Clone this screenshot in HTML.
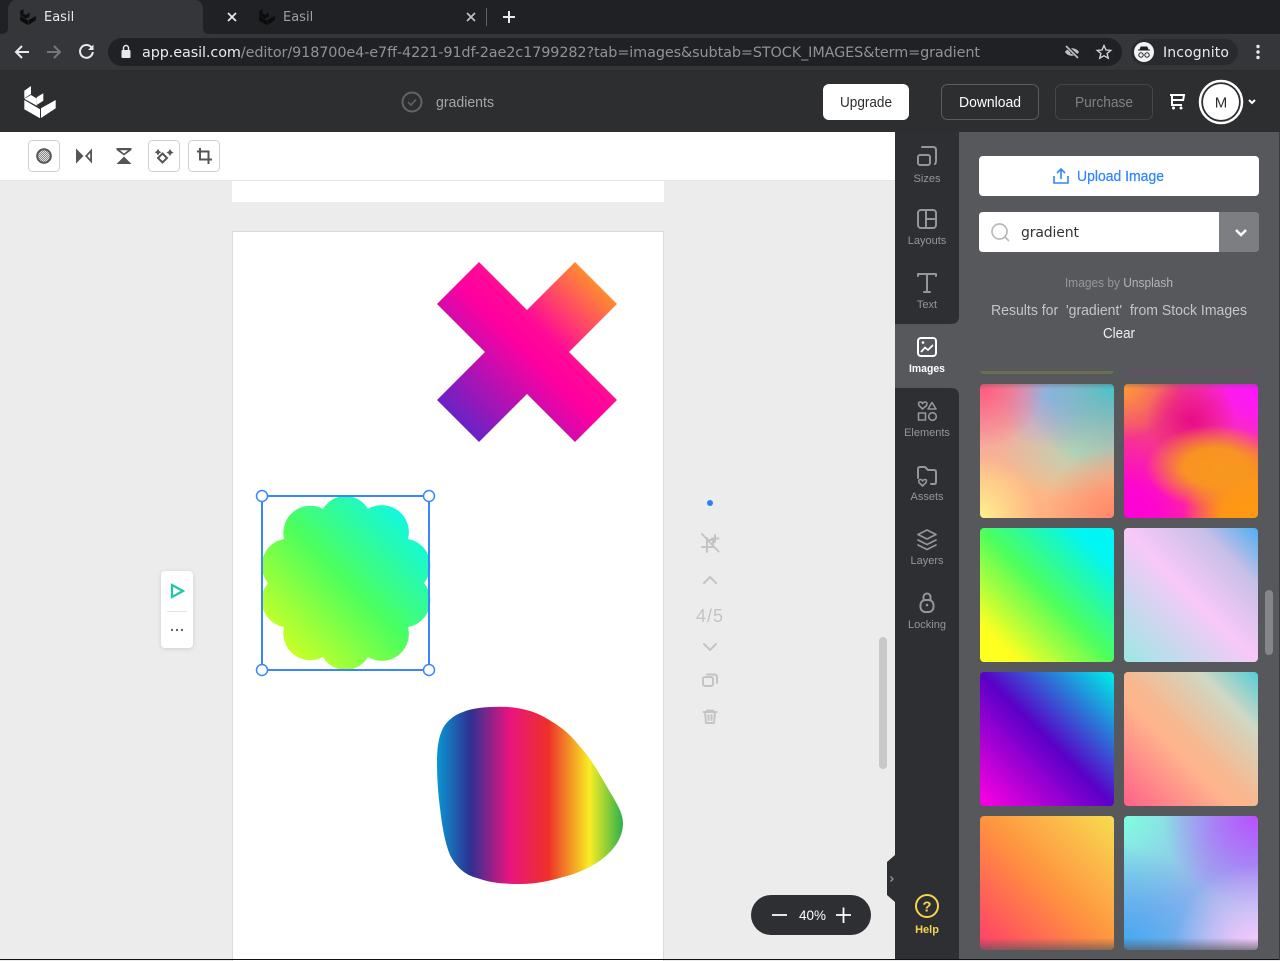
<!DOCTYPE html>
<html><head><meta charset="utf-8"><title>Easil</title>
<style>
html,body{margin:0;padding:0;width:1280px;height:960px;overflow:hidden;background:#ececec}
.a{position:absolute}
.t{position:absolute;width:134px;height:134px;border-radius:4px;overflow:hidden}
svg{position:absolute;left:0;top:0}
text{font-family:"Liberation Sans",sans-serif}
.d{font-family:"DejaVu Sans",sans-serif}
.lab{font-size:11px;fill:#95969a;text-anchor:middle}
.ic{fill:none;stroke:#95969a;stroke-width:2;stroke-linecap:round;stroke-linejoin:round}
.gr{fill:none;stroke:#c4c4c4;stroke-width:2;stroke-linecap:round;stroke-linejoin:round}
</style></head><body>
<div class="a" style="left:232px;top:180px;width:432px;height:22px;background:#fff"></div>
<div class="a" style="left:232px;top:231px;width:430px;height:729px;background:#fff;border:1px solid #dcdcdc;border-bottom:0"></div>
<div class="a" style="left:959px;top:132px;width:321px;height:828px;background:#57585c"></div>

<div class="a" style="left:980px;top:362px;width:134px;height:12px;background:#6c6d52;border-radius:0 0 4px 4px;clip-path:inset(9px 0 0 0)"></div>
<div class="a" style="left:1124px;top:362px;width:134px;height:12px;background:#654e66;border-radius:0 0 4px 4px;clip-path:inset(9px 0 0 0)"></div>

<div class="t" style="left:980px;top:384px;background:radial-gradient(circle 60px at 0% 100%,#fff190 0,rgba(255,241,144,0) 100%),radial-gradient(circle 70px at 100% 100%,#ff8668 0,rgba(255,134,104,0) 100%),radial-gradient(circle 65px at 0% 0%,#ff557c 0,rgba(255,85,124,0) 100%),radial-gradient(circle 90px at 100% 0%,#42c4cc 0,rgba(66,196,204,.6) 40%,rgba(66,196,204,0) 100%),radial-gradient(circle 55px at 52% 8%,#a0aee6 0,rgba(160,174,230,0) 100%),radial-gradient(ellipse 75px 50px at 70% 50%,#bcd4b4 0,rgba(188,212,180,0) 100%),linear-gradient(180deg,#f0a4a8 0,#f4aca0 40%,#fdb888 72%,#ffb080 100%)"></div>
<div class="t" style="left:1124px;top:384px;background:radial-gradient(ellipse 70px 42px at 68% 62%,#f8981e 0,rgba(248,152,30,.95) 45%,rgba(248,152,30,0) 100%),radial-gradient(circle 75px at 100% 100%,#ff9a10 0,rgba(255,154,16,.95) 50%,rgba(255,154,16,0) 100%),radial-gradient(circle 45px at 50% 27%,#e80c88 0,rgba(232,12,136,0) 100%),radial-gradient(circle 85px at 100% 0%,#ff14ff 0,rgba(255,20,255,.85) 35%,rgba(255,20,255,0) 100%),radial-gradient(circle 55px at 0% 0%,#ffa032 0,rgba(255,160,50,0) 100%),radial-gradient(circle 95px at 0% 100%,#ff00d8 0,rgba(255,0,216,.9) 35%,rgba(255,0,216,0) 100%),linear-gradient(#f0487a,#f83a80)"></div>
<div class="t" style="left:980px;top:528px;background:linear-gradient(45deg,#ffff20 14%,#4dff5c 50%,#00f5f5 86%)"></div>
<div class="t" style="left:1124px;top:528px;background:linear-gradient(45deg,#9ce8e4 0,#f8c8f8 50%,#c8c0e8 78%,#50aef0 100%)"></div>
<div class="t" style="left:980px;top:672px;background:linear-gradient(45deg,#f400e0 4%,#5a00c8 50%,#00e8e8 98%)"></div>
<div class="t" style="left:1124px;top:672px;background:linear-gradient(45deg,#ff6488 2%,#ffb48c 40%,#f8b890 50%,#cfd8c4 78%,#56ccd8 100%)"></div>
<div class="t" style="left:980px;top:816px;background:linear-gradient(45deg,#ff4068 2%,#ff9040 48%,#f8dc50 100%)"></div>
<div class="t" style="left:1124px;top:816px;background:radial-gradient(circle 85px at 100% 100%,#ffccff 0,rgba(255,204,255,0) 100%),radial-gradient(circle 95px at 100% 0%,#b850ff 0,rgba(184,80,255,0) 100%),radial-gradient(circle 105px at 0% 100%,#40a8f0 0,rgba(64,168,240,0) 100%),radial-gradient(circle 100px at 0% 0%,#80ffe0 0,rgba(128,255,224,0) 100%),#98b4ec"></div>
<div class="a" style="left:980px;top:384px;width:278px;height:5px;background:linear-gradient(#57585c55,#57585c00)"></div>
<div class="a" style="left:980px;top:938px;width:278px;height:12px;background:linear-gradient(#57585c00,#57585cb0)"></div>

<svg width="1280" height="960" viewBox="0 0 1280 960">
<defs>
<linearGradient id="gx" x1="0" y1="1" x2="1" y2="0"><stop offset="0.12" stop-color="#6a22c4"/><stop offset=".5" stop-color="#ff00a0"/><stop offset=".6" stop-color="#ff0a98"/><stop offset=".88" stop-color="#ff8a30"/></linearGradient>
<linearGradient id="gf" x1="0" y1="1" x2="1" y2="0"><stop offset=".14" stop-color="#c8ff28"/><stop offset=".5" stop-color="#4dff5c"/><stop offset=".88" stop-color="#10f8e4"/></linearGradient>
<linearGradient id="gb" gradientUnits="userSpaceOnUse" x1="437" y1="0" x2="623" y2="0">
<stop offset="0" stop-color="#0a96d2"/><stop offset=".18" stop-color="#2e3092"/><stop offset=".39" stop-color="#e9147f"/><stop offset=".6" stop-color="#ed3129"/><stop offset=".82" stop-color="#f9ed24"/><stop offset="1" stop-color="#2cb14a"/></linearGradient>
<pattern id="ck" width="2" height="2" patternUnits="userSpaceOnUse"><rect width="2" height="2" fill="#8a8a8a"/><rect width="1" height="1" fill="#e0e0e0"/><rect x="1" y="1" width="1" height="1" fill="#e0e0e0"/></pattern>
<g id="logo">
<path d="M24.300 90.700 L31 86 V94 L24.300 98.300Z"/>
<path d="M36.700 97.300 L43.300 93.300 V100.700 L36.700 105Z"/>
<path d="M41 108.300 L55.700 100 V108.300 L41 118Z"/>
<path d="M24.300 100 L40 109.300 V118.300 L24.300 109.300Z"/>
<path d="M24.300 98.800 L31 95 L36.700 98.500 V105.500 L40 107.500 L26 99.800Z"/>
</g>
</defs>

<!-- browser chrome -->
<rect width="1280" height="34" fill="#202124"/>
<path d="M0 34 C6 34 8 32 8 28 V10 C8 4 12 0 16 0 H195 C200 0 203 4 203 10 V28 C203 32 205 34 211 34 Z" fill="#35363a"/>
<rect y="34" width="1280" height="36" fill="#35363a"/>
<rect y="70" width="1280" height="1" fill="#2a2b2e"/>
<use href="#logo" transform="translate(8,-34) scale(.5)" fill="#0c0c0c"/>
<use href="#logo" transform="translate(247,-34) scale(.5)" fill="#0c0c0c"/>
<text x="44" y="21" class="d" font-size="13" fill="#e8eaed">Easil</text>
<text x="283" y="21" class="d" font-size="13" fill="#9aa0a6">Easil</text>
<path d="M228 13 L236 21 M236 13 L228 21" stroke="#e8eaed" stroke-width="1.700"/>
<path d="M467 13 L475 21 M475 13 L467 21" stroke="#bdc1c6" stroke-width="1.700"/>
<rect x="486" y="8" width="1" height="18" fill="#5f6368"/>
<path d="M509 11 V23 M503 17 H515" stroke="#e8eaed" stroke-width="2"/>
<path d="M29 52 H16 M22 46 L16 52 L22 58" fill="none" stroke="#e8eaed" stroke-width="2"/>
<path d="M47 52 H60 M54 46 L60 52 L54 58" fill="none" stroke="#74777b" stroke-width="2"/>
<path d="M91.500 47.500 A6.400 6.400 0 1 0 92.800 52" fill="none" stroke="#e8eaed" stroke-width="2"/><path d="M93.500 44.500 V50 H88Z" fill="#e8eaed"/>
<rect x="108" y="38" width="1014" height="28" rx="14" fill="#202124"/>
<rect x="121.500" y="50" width="9" height="8" rx="1" fill="#e8eaed"/><path d="M123.500 50 V48 a2.500 2.500 0 0 1 5 0 V50" fill="none" stroke="#e8eaed" stroke-width="1.400"/>
<text x="142" y="57" class="d" font-size="14.400" fill="#8f9398" textLength="838" lengthAdjust="spacing"><tspan fill="#e8eaed">app.easil.com</tspan>/editor/918700e4-e7ff-4221-91df-2ae2c1799282?tab=images&amp;subtab=STOCK_IMAGES&amp;term=gradient</text>
<path d="M1065 52 C1068 47 1076 47 1079 52 C1076 57 1068 57 1065 52Z" fill="#bdc1c6"/><circle cx="1072" cy="52" r="2" fill="#202124"/><path d="M1066 46 L1079 58" stroke="#202124" stroke-width="3.500"/><path d="M1066 46 L1078 58" stroke="#bdc1c6" stroke-width="1.600"/>
<path d="M1104 45.500 L1106 50 L1110.800 50.400 L1107.100 53.500 L1108.300 58.200 L1104 55.700 L1099.700 58.200 L1100.900 53.500 L1097.200 50.400 L1102 50Z" fill="none" stroke="#d8dadd" stroke-width="1.300"/>
<rect x="1131" y="39" width="107" height="26" rx="13" fill="#292a2d"/>
<circle cx="1144" cy="52" r="10" fill="#f1f3f4"/>
<path d="M1138 50.500 H1150 V49.500 H1148.500 L1147.300 46.500 H1140.700 L1139.500 49.500 H1138Z" fill="#202124"/>
<circle cx="1141" cy="55" r="2.200" fill="none" stroke="#202124" stroke-width="1"/><circle cx="1147" cy="55" r="2.200" fill="none" stroke="#202124" stroke-width="1"/>
<text x="1163" y="57" class="d" font-size="14" fill="#e8eaed" textLength="66">Incognito</text>
<circle cx="1258" cy="46.500" r="1.700" fill="#e8eaed"/><circle cx="1258" cy="52" r="1.700" fill="#e8eaed"/><circle cx="1258" cy="57.500" r="1.700" fill="#e8eaed"/>

<!-- app header -->
<rect y="71" width="1280" height="61" fill="#2d2e30"/>
<use href="#logo" fill="#fff"/>
<circle cx="412" cy="102" r="9.500" fill="none" stroke="#636467" stroke-width="2"/>
<path d="M408 102 L411 105 L416 99.500" fill="none" stroke="#636467" stroke-width="1.500"/>
<text x="436" y="107" font-size="15" fill="#a4a5a7" textLength="58" lengthAdjust="spacingAndGlyphs">gradients</text>
<rect x="823" y="84" width="86" height="36" rx="6" fill="#fff"/>
<text x="840" y="107" font-size="15" fill="#2d2e30" textLength="52" lengthAdjust="spacingAndGlyphs">Upgrade</text>
<rect x="941.500" y="84.500" width="97" height="35" rx="6" fill="none" stroke="#5c5d60"/>
<text x="959" y="107" font-size="15" fill="#fff" textLength="62" lengthAdjust="spacingAndGlyphs">Download</text>
<rect x="1055.500" y="84.500" width="97" height="35" rx="6" fill="none" stroke="#45464a"/>
<text x="1075" y="107" font-size="15" fill="#808184" textLength="58" lengthAdjust="spacingAndGlyphs">Purchase</text>
<path d="M1170 95 H1184 L1183 101 M1172 95 V105 H1182 M1172 100 H1183" fill="none" stroke="#fff" stroke-width="2"/><circle cx="1173.500" cy="108" r="1.500" fill="#fff"/><circle cx="1181" cy="108" r="1.500" fill="#fff"/>
<circle cx="1221" cy="102" r="21" fill="#2d2e30" stroke="#fff" stroke-width="2.500"/>
<circle cx="1221" cy="102" r="18" fill="#fff"/>
<text x="1221" y="107.500" font-size="15" fill="#2d2e30" text-anchor="middle">M</text>
<path d="M1249 100 L1252 103 L1255 100" fill="none" stroke="#fff" stroke-width="2"/>

<!-- toolbar -->
<rect y="132" width="895" height="48" fill="#fff"/>
<rect y="180" width="895" height="1" fill="#e6e6e6"/>
<rect x="28.500" y="140.500" width="31" height="31" rx="4" fill="#fff" stroke="#d0d0d0"/>
<rect x="148.500" y="140.500" width="31" height="31" rx="4" fill="#fff" stroke="#d0d0d0"/>
<rect x="188.500" y="140.500" width="31" height="31" rx="4" fill="#fff" stroke="#d0d0d0"/>
<circle cx="44" cy="156" r="6.800" fill="url(#ck)" stroke="#555" stroke-width="2"/>
<path d="M76 148.500 L83.500 156 L76 163.500Z M92 148.500 V163.500 L85 156Z" fill="#555"/>
<path d="M90.200 153 L87.400 156 L90.200 159Z" fill="#fff"/>
<path d="M116.500 148 H131.500 V150 L124 155.500 L116.500 150Z M116.500 164 H131.500 L124 156.500Z" fill="#555"/>
<path d="M120 150.300 H128 L124 153.500Z" fill="#fff"/>
<path d="M162.500 153.500 L167 158 L162.500 162.500 L158 158Z" fill="none" stroke="#555" stroke-width="2"/>
<path d="M158 148.800 L159.200 151 L161.400 152.200 L159.200 153.400 L158 155.600 L156.800 153.400 L154.600 152.200 L156.800 151Z M170 149 L171.300 151.200 L173.500 152.500 L171.300 153.800 L170 156 L168.700 153.800 L166.500 152.500 L168.700 151.200Z" fill="#555"/>
<path d="M200 148 V159.500 H212 M197 151.500 H208.500 V164" fill="none" stroke="#555" stroke-width="2"/>

<!-- canvas objects -->
<path d="M479 262 L527 310 L575 262 L617 304 L569 352 L617 400 L575 442 L527 394 L479 442 L437 400 L485 352 L437 304Z" fill="url(#gx)"/>
<path d="M323 509 A26 26 0 0 1 368 509 A27 27 0 0 1 408 539 A27 27 0 0 1 424 583 A27 27 0 0 1 408 627 A27 27 0 0 1 368 657 A26 26 0 0 1 323 657 A27 27 0 0 1 284 627 A27 27 0 0 1 268 583 A27 27 0 0 1 284 539 A27 27 0 0 1 323 509Z" fill="url(#gf)"/>
<rect x="262" y="496" width="167" height="174" fill="none" stroke="#3a86ff" stroke-width="2"/>
<g fill="#fff" stroke="#3a86ff" stroke-width="1.500"><circle cx="262" cy="496" r="5.500"/><circle cx="429" cy="496" r="5.500"/><circle cx="262" cy="670" r="5.500"/><circle cx="429" cy="670" r="5.500"/></g>
<path d="M500 706.700 C486 706.700 472 708 463 712 C454 715 447 721 443 728 C438 738 437 750 437 762 C437 778 438 793 440 808 C442 826 445 843 450 855 C456 867 465 875 477 878 C490 883 505 884 520 884 C535 884 550 881 563 877 C580 873 596 865 607 855 C617 846 623 835 623 823 C623 813 616 802 610 792 C603 780 596 767 587 755 C578 744 570 734 560 727 C550 720 540 714 530 711 C520 708 510 706.700 500 706.700Z" fill="url(#gb)"/>

<!-- left floating -->
<rect x="161" y="571" width="32" height="77" rx="4" fill="#fff" style="filter:drop-shadow(0 1px 2px rgba(0,0,0,.12))"/>
<path d="M172 585 L183 591 L172 597Z" fill="none" stroke="#1fc8a0" stroke-width="2.200"/>
<rect x="167" y="611" width="20" height="1" fill="#e2e2e2"/>
<circle cx="172" cy="630" r="1.100" fill="#555"/><circle cx="177" cy="630" r="1.100" fill="#555"/><circle cx="182" cy="630" r="1.100" fill="#555"/>

<!-- page controls -->
<circle cx="710" cy="503" r="3" fill="#2d7ff9"/>
<path d="M702 534 L718.500 551.500 M707 538 V552 M702 547 H713 M708 540 H713 V547 M715 535 V542 M711.500 538.500 H718.500" class="gr"/>
<path d="M704 583 L710 577 L716 583" class="gr"/>
<text x="696" y="622" font-size="18" fill="#c4c4c4" textLength="27">4/5</text>
<path d="M704 644 L710 650 L716 644" class="gr"/>
<rect x="703" y="677" width="10" height="9" rx="2" class="gr"/><path d="M707 674.500 H714 Q717 674.500 717 677 V683" class="gr"/>
<path d="M703.500 712 H716.500 M707 712 V710.500 H713 V712 M705 712 L706 723 H714 L715 712 M708.500 715 V720 M711.500 715 V720" class="gr"/>

<!-- canvas scrollbar -->
<rect x="879" y="637" width="8" height="132" rx="4" fill="#c8c8c8"/>

<!-- zoom pill -->
<rect x="751" y="895" width="120" height="40" rx="20" fill="#2e2f32"/>
<path d="M772 915 H787 M836 915 H851 M843.500 907.500 V923" stroke="#fff" stroke-width="1.800"/>
<text x="799" y="920" font-size="14" fill="#fff" textLength="27" lengthAdjust="spacingAndGlyphs">40%</text>

<!-- sidebar -->
<rect x="895" y="310" width="64" height="95" fill="#57585c"/>
<path d="M895 132 H959 V316 Q959 324 951 324 H895Z" fill="#2e2f32"/>
<path d="M895 388 H951 Q959 388 959 396 V960 H895Z" fill="#2e2f32"/>
<path d="M895 855 L887 862 V895 L895 902Z" fill="#2e2f32"/>
<path d="M890.500 876.500 L893 879 L890.500 881.500" fill="none" stroke="#95969a" stroke-width="1.300"/>

<rect x="918" y="155" width="12" height="10" rx="2" class="ic"/><path d="M922 147 H933 Q936 147 936 150 V161 Q936 163 935 164" class="ic"/>
<text x="927" y="182" class="lab">Sizes</text>
<rect x="918" y="210" width="18" height="18" rx="3" class="ic"/><path d="M926 210 V228 M926 219 H936" class="ic"/>
<text x="927" y="244" class="lab">Layouts</text>
<path d="M918 276 V274 H936 V276 M927 274 V292 M924 292 H930" class="ic"/>
<text x="927" y="308" class="lab">Text</text>
<rect x="918" y="338" width="18" height="18" rx="3" fill="none" stroke="#fff" stroke-width="2"/><path d="M921 352 L925 347.500 L928 350 L933 345" fill="none" stroke="#fff" stroke-width="1.700"/><circle cx="923" cy="342.500" r="1.300" fill="#fff"/>
<text x="909" y="372" style="fill:#fff;font-weight:bold" font-size="11" textLength="36" lengthAdjust="spacingAndGlyphs">Images</text>
<path d="M922.500 409 L919 405.500 Q917.500 402 920.500 402 Q922 402 922.500 403.500 Q923.500 402 925 402 Q927.800 402 926.500 405.500Z" class="ic" style="stroke-width:1.600"/>
<path d="M932 402.500 L936 409 H928Z" class="ic" style="stroke-width:1.600"/>
<rect x="918.500" y="413" width="7" height="7" class="ic" style="stroke-width:1.600"/><circle cx="932.500" cy="416.500" r="3.800" class="ic" style="stroke-width:1.600"/>
<text x="927" y="436" class="lab">Elements</text>
<path d="M918 478 V469 Q918 467 920 467 H925 L928 470 H934 Q936 470 936 472 V482 Q936 484 934 484 H931" class="ic"/>
<path d="M922.500 486 L919 482.500 Q918 479.500 920.500 479.500 Q922 479.500 922.500 481 Q923.500 479.500 925 479.500 Q927.500 479.500 926 482.500Z" class="ic" style="stroke-width:1.600"/>
<text x="927" y="500" class="lab">Assets</text>
<path d="M927 530 L936 534.500 L927 539 L918 534.500Z M918 540 L927 544.500 L936 540 M918 545 L927 549.500 L936 545" class="ic" style="stroke-width:1.700"/>
<text x="927" y="564" class="lab">Layers</text>
<rect x="920.500" y="600" width="13" height="12" rx="5" class="ic"/><path d="M923.500 600 V597 a3.500 3.500 0 0 1 7 0 V600" class="ic"/><circle cx="927" cy="605" r="1.300" fill="#95969a"/>
<text x="927" y="628" class="lab">Locking</text>
<circle cx="927" cy="906" r="11" fill="none" stroke="#f5d44e" stroke-width="2"/>
<text x="927" y="911.500" font-size="15" font-weight="bold" fill="#f5d44e" text-anchor="middle">?</text>
<text x="927" y="933" font-size="11" font-weight="bold" fill="#f5d44e" text-anchor="middle">Help</text>

<!-- panel -->
<rect x="979" y="156" width="280" height="40" rx="4" fill="#fff"/>
<path d="M1054 176 V183 H1068 V176 M1061 179 V169.500 M1057 173 L1061 169 L1065 173" fill="none" stroke="#2f86ff" stroke-width="1.600"/>
<text x="1077" y="181" font-size="15" fill="#2f86ff" stroke="#2f86ff" stroke-width=".25" textLength="87" lengthAdjust="spacingAndGlyphs">Upload Image</text>
<path d="M983 212 H1219 V252 H983 Q979 252 979 248 V216 Q979 212 983 212Z" fill="#fff"/>
<path d="M1219 212 H1255 Q1259 212 1259 216 V248 Q1259 252 1255 252 H1219Z" fill="#7d7e82"/>
<circle cx="999.500" cy="231.500" r="7.500" fill="none" stroke="#b8b9bb" stroke-width="1.700"/><path d="M1005 237 L1009 241" stroke="#b8b9bb" stroke-width="1.700"/>
<text x="1021" y="237" class="d" font-size="14" fill="#333" textLength="58">gradient</text>
<path d="M1236 230 L1241 235 L1246 230" fill="none" stroke="#fff" stroke-width="2.500"/>
<text x="1065" y="287" font-size="13" fill="#97989b" textLength="108" lengthAdjust="spacingAndGlyphs">Images by <tspan fill="#b4b5b7">Unsplash</tspan></text>
<text x="991" y="315" font-size="15" fill="#c4c5c7" textLength="256" lengthAdjust="spacingAndGlyphs" xml:space="preserve">Results for  'gradient'  from Stock Images</text>
<text x="1103" y="338" font-size="15" fill="#f0f0f0" textLength="32" lengthAdjust="spacingAndGlyphs">Clear</text>
<rect x="1265" y="590" width="8" height="65" rx="4" fill="#85868a"/>
<rect y="959" width="1280" height="1" fill="#111"/>
<rect x="1279" y="132" width="1" height="828" fill="#3a3b3e"/>
</svg>
</body></html>
